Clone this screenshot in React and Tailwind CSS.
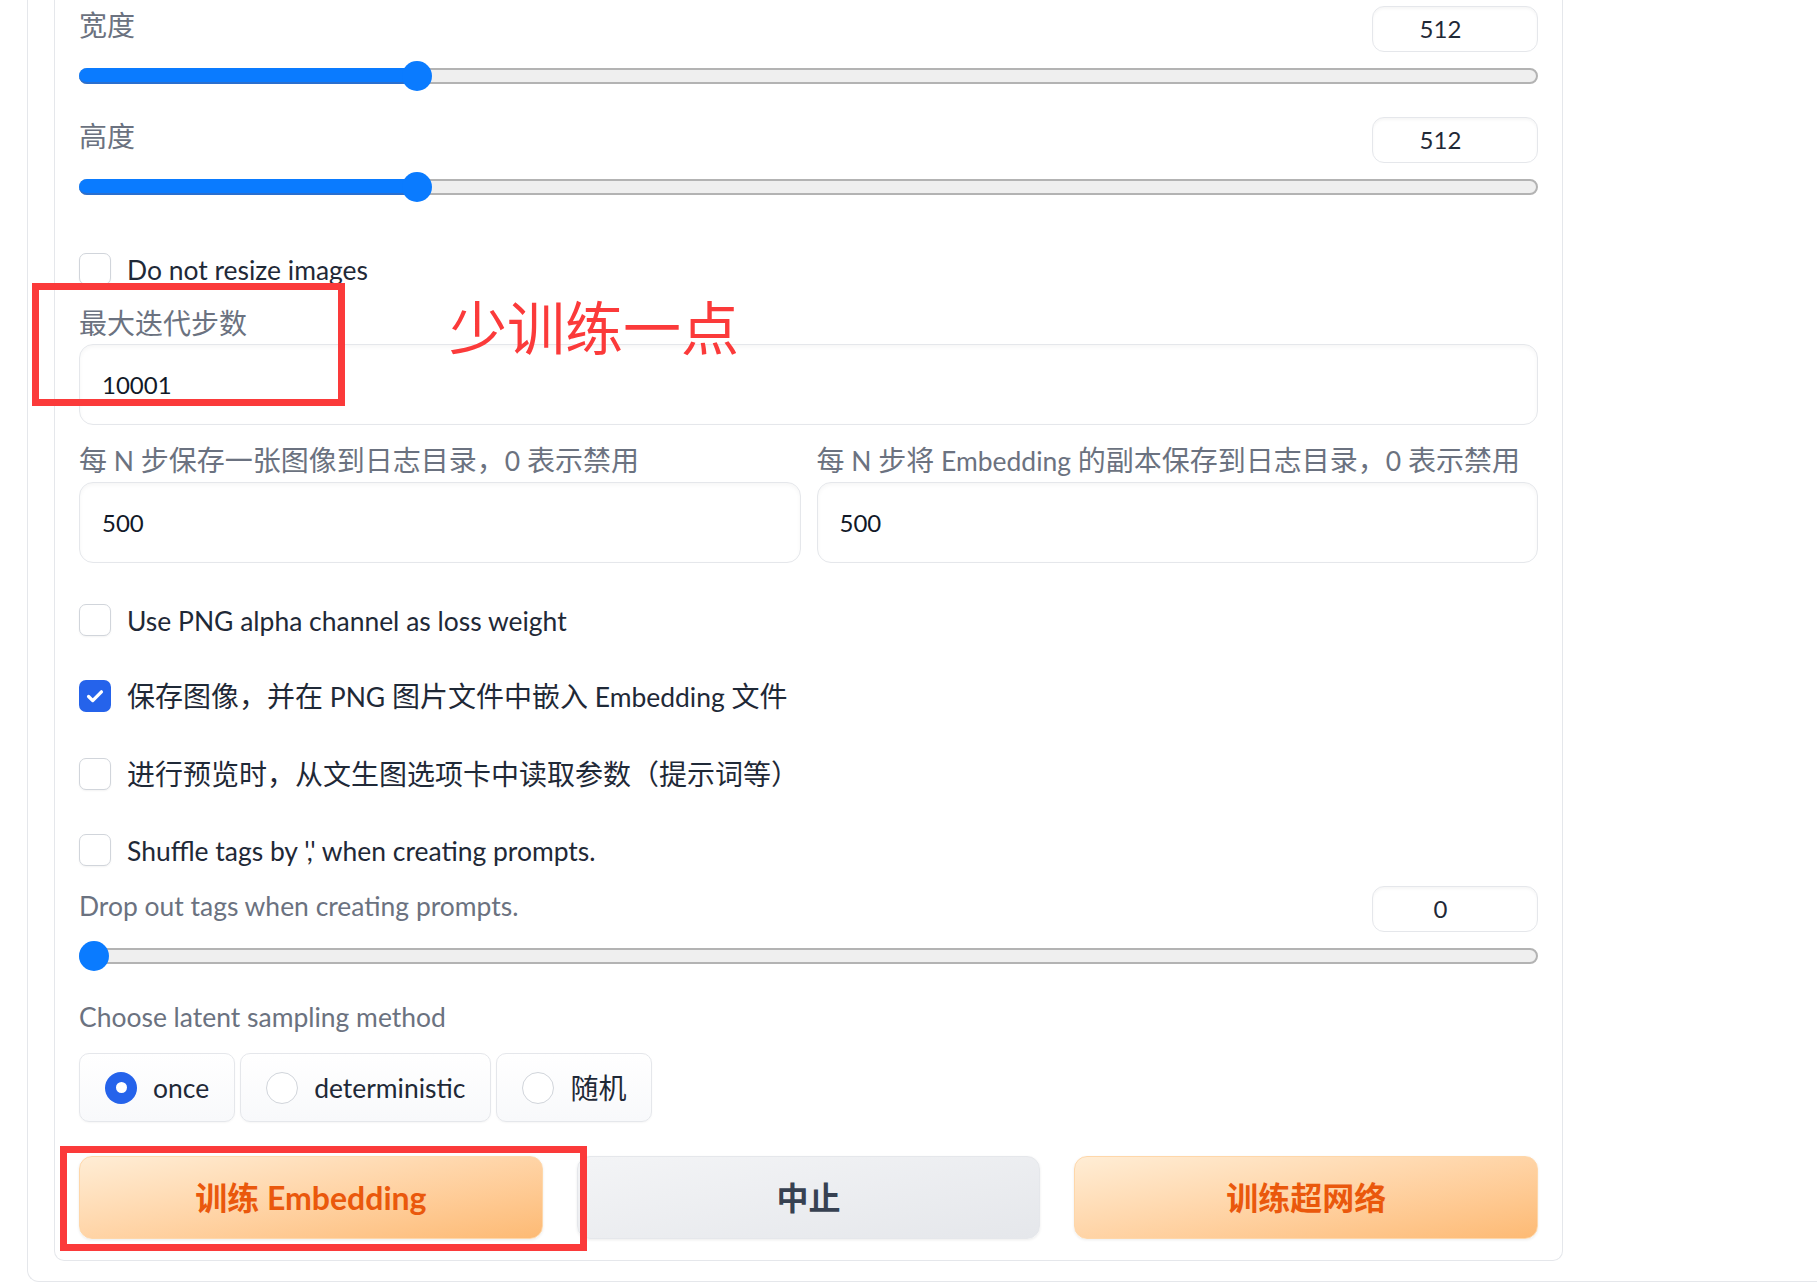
import React from "react";

const FONT = "font-['Lato','Noto_Sans_CJK_SC',sans-serif]";
const LABEL = "text-[28px] leading-[42px] text-[#6b7280] whitespace-nowrap";
const TRACK = 1459;
const CJK = /([\u2e80-\u9fff\u3000-\u303f\uff00-\uffef]+)/;

// Latin runs are set a touch smaller so they keep the narrow Source Sans widths
function T({ children }) {
  return String(children)
    .split(CJK)
    .filter(Boolean)
    .map((part, i) =>
      CJK.test(part) ? (
        <span key={i}>{part}</span>
      ) : (
        <span key={i} className="text-[0.945em]">{part}</span>
      )
    );
}

function Slider({ value, min, max }) {
  // thumb stays inside the track, like a native range input
  const left = ((value - min) / (max - min)) * (TRACK - 30);
  return (
    <div className="relative mt-[9px] h-[30px]">
      <div className="absolute left-0 right-0 top-[7px] h-[16px] rounded-full border-2 border-[#b3b3b3] bg-[#efefef]" />
      {left > 0 && (
        <div
          className="absolute left-0 top-[7px] h-[16px] rounded-l-full border-b-2 border-[#2a6fcf] bg-[#0a7bff]"
          style={{ width: left + 15 }}
        />
      )}
      <div
        className="absolute top-0 h-[30px] w-[30px] rounded-full bg-[#0a7bff]"
        style={{ left }}
      />
    </div>
  );
}

function SliderBlock({ label, value, min, max, className = "" }) {
  return (
    <div className={className}>
      <div className="flex items-start justify-between h-[46px]">
        <span className="text-[28px] leading-[39px] text-[#6b7280]"><T>{label}</T></span>
        <div className="w-[166px] h-[46px] rounded-[12px] border border-[#e5e7eb] bg-white shadow-[inset_0_2px_3px_rgba(0,0,0,0.04)] pr-[29px] text-center text-[24px] leading-[44px] text-[#1f2937]">
          {value}
        </div>
      </div>
      <Slider value={value} min={min} max={max} />
    </div>
  );
}

function Checkbox({ label, checked, className = "" }) {
  return (
    <div className={`flex items-center gap-[16px] h-[42px] ${className}`}>
      {checked ? (
        <div className="flex items-center justify-center w-[32px] h-[32px] rounded-[7px] bg-[#2563eb]">
          <svg viewBox="0 0 24 24" className="w-[22px] h-[22px]" fill="none" stroke="white" strokeWidth="3.6" strokeLinecap="round" strokeLinejoin="round">
            <path d="M5 12.5l4.5 4.5L19 7.5" />
          </svg>
        </div>
      ) : (
        <div className="w-[32px] h-[32px] rounded-[7px] border-[1.5px] border-[#d1d5db] bg-white shadow-[0_1px_2px_rgba(0,0,0,0.05)]" />
      )}
      <span className="text-[28px] leading-[42px] text-[#1f2937] whitespace-nowrap"><T>{label}</T></span>
    </div>
  );
}

function TextBox({ label, value, className = "" }) {
  return (
    <div className={className}>
      <div className={LABEL}><T>{label}</T></div>
      <div className="flex items-center h-[81px] px-[22px] rounded-[14px] border border-[#e5e7eb] bg-white shadow-[inset_0_2px_4px_rgba(0,0,0,0.04)] text-[24px] text-[#111827]">
        {value}
      </div>
    </div>
  );
}

function Radio({ label, checked }) {
  return (
    <div className="flex items-center gap-[16px] h-[69px] px-[25px] rounded-[10px] border border-[#e5e7eb] bg-linear-to-b from-white to-[#f8f9fb] shadow-[0_1px_2px_rgba(0,0,0,0.04)]">
      {checked ? (
        <div className="flex items-center justify-center w-[32px] h-[32px] rounded-full bg-[#2563eb]">
          <div className="w-[11px] h-[11px] rounded-full bg-white" />
        </div>
      ) : (
        <div className="w-[32px] h-[32px] rounded-full border-[1.5px] border-[#d1d5db] bg-white" />
      )}
      <span className="text-[28px] text-[#1f2937]"><T>{label}</T></span>
    </div>
  );
}

export default function App() {
  return (
    <div className={`relative w-full overflow-hidden bg-white ${FONT}`}>
      <div className="ml-[27px] pl-[26px] pb-[20px] border-l border-b border-[#e5e7eb] rounded-bl-[12px]">
        <div className="w-[1509px] px-[24px] pt-[6px] pb-[21px] border-x border-b border-[#e5e7eb] rounded-b-[10px]">
          <SliderBlock label="宽度" value={512} min={64} max={2048} />
          <SliderBlock label="高度" value={512} min={64} max={2048} className="mt-[26px]" />

          <Checkbox label="Do not resize images" className="mt-[46px]" />

          <TextBox label="最大迭代步数" value="10001" className="mt-[12px]" />

          <div className="flex gap-[16px] mt-[14px]">
            <TextBox label="每 N 步保存一张图像到日志目录，0 表示禁用" value="500" className="flex-1" />
            <TextBox label="每 N 步将 Embedding 的副本保存到日志目录，0 表示禁用" value="500" className="flex-1" />
          </div>

          <Checkbox label="Use PNG alpha channel as loss weight" className="mt-[36px]" />
          <Checkbox label="保存图像，并在 PNG 图片文件中嵌入 Embedding 文件" checked className="mt-[34px]" />
          <Checkbox label="进行预览时，从文生图选项卡中读取参数（提示词等）" className="mt-[36px]" />
          <Checkbox label="Shuffle tags by ',' when creating prompts." className="mt-[34px]" />

          <SliderBlock label="Drop out tags when creating prompts." value={0} min={0} max={1} className="mt-[15px]" />

          <div className={`${LABEL} mt-[24px]`}><T>Choose latent sampling method</T></div>
          <div className="flex gap-[5px] mt-[15px]">
            <Radio label="once" checked />
            <Radio label="deterministic" />
            <Radio label="随机" />
          </div>

          <div className="flex gap-[34px] mt-[34px]">
            <button className="flex-1 h-[83px] rounded-[13px] border border-[#fed7aa] bg-linear-to-br from-[#ffedd5] to-[#fdba74] text-[32px] font-bold text-[#ea580c] shadow-[0_1px_3px_rgba(0,0,0,0.08)]">
              训练 Embedding
            </button>
            <button className="flex-1 h-[83px] rounded-[13px] border border-[#e5e7eb] bg-linear-to-br from-[#f3f4f6] to-[#e5e7eb] text-[32px] font-bold text-[#374151] shadow-[0_1px_3px_rgba(0,0,0,0.08)]">
              中止
            </button>
            <button className="flex-1 h-[83px] rounded-[13px] border border-[#fed7aa] bg-linear-to-br from-[#ffedd5] to-[#fdba74] text-[32px] font-bold text-[#ea580c] shadow-[0_1px_3px_rgba(0,0,0,0.08)]">
              训练超网络
            </button>
          </div>
        </div>
      </div>

      {/* red annotation marks drawn over the screenshot */}
      <div className="absolute left-[32px] top-[283px] w-[313px] h-[123px] border-[7px] border-[#fb3a3a]" />
      <div className="absolute left-[449px] top-[296px] text-[58px] leading-[64px] text-[#fb3a3a]">少训练一点</div>
      <div className="absolute left-[60px] top-[1146px] w-[527px] h-[105px] border-[7px] border-[#fb3a3a]" />
    </div>
  );
}
